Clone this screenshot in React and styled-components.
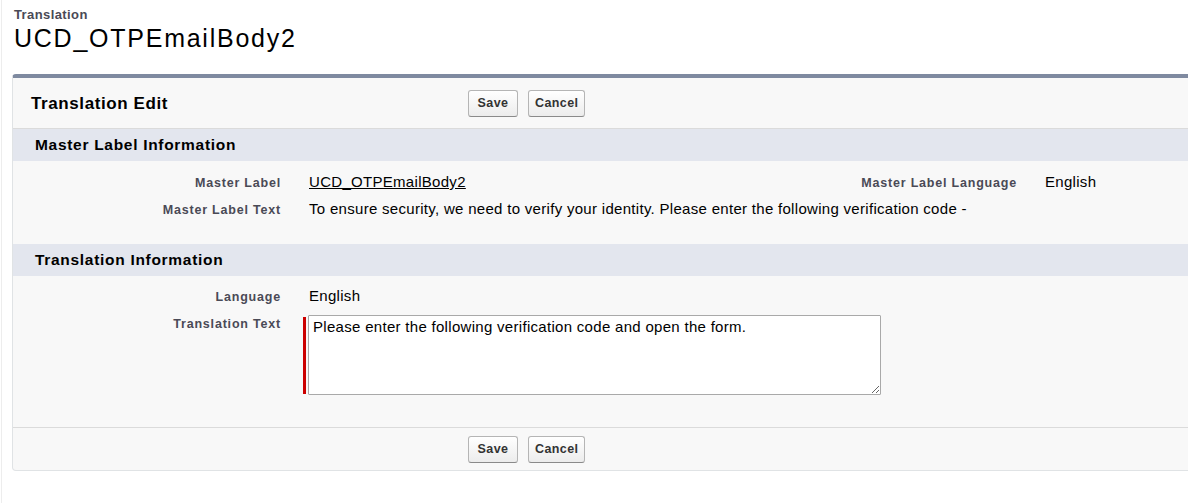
import React from "react";
import styled, { createGlobalStyle } from "styled-components";

const GlobalStyle = createGlobalStyle`
  html, body {
    margin: 0;
    padding: 0;
    background: #fff;
    overflow: hidden;
  }
  body {
    font-family: "Liberation Sans", Arial, sans-serif;
    color: #000;
  }
`;

const App = () => {
  return (
    <>
      <GlobalStyle />
      <Page>
        <PageHeader>
          <PageType>Translation</PageType>
          <PageTitle>UCD_OTPEmailBody2</PageTitle>
        </PageHeader>

        <Panel>
          <PanelHeader>
            <PanelTitle>Translation Edit</PanelTitle>
            <ButtonGroup>
              <Button>Save</Button>
              <Button>Cancel</Button>
            </ButtonGroup>
          </PanelHeader>

          <SectionHeader>Master Label Information</SectionHeader>
          <SectionBody top={9} bottom={20}>
            <FieldGrid>
              <Label>Master Label</Label>
              <Value>
                <LinkText>UCD_OTPEmailBody2</LinkText>
              </Value>
              <Label>Master Label Language</Label>
              <Value>English</Value>

              <Label>Master Label Text</Label>
              <Value span={3}>
                To ensure security, we need to verify your identity. Please enter the following verification code -
              </Value>
            </FieldGrid>
          </SectionBody>

          <SectionHeader>Translation Information</SectionHeader>
          <SectionBody top={8} bottom={29}>
            <FieldGrid>
              <Label>Language</Label>
              <Value span={3}>English</Value>

              <Label>Translation Text</Label>
              <Value span={3}>
                <RequiredField>
                  <RequiredBar />
                  <TextArea defaultValue="Please enter the following verification code and open the form." />
                </RequiredField>
              </Value>
            </FieldGrid>
          </SectionBody>

          <PanelFooter>
            <ButtonGroup>
              <Button>Save</Button>
              <Button>Cancel</Button>
            </ButtonGroup>
          </PanelFooter>
        </Panel>
      </Page>
    </>
  );
};

export default App;

const Page = styled.div`
  margin-left: 1px;
  border-left: 1px solid #ededed;
  padding: 8px 0 0 10px;
  min-height: 503px;
  box-sizing: border-box;
`;

const PageHeader = styled.div`
  padding: 0 0 0 2px;
  margin-bottom: 22px;
`;

const PageType = styled.div`
  font-size: 13px;
  letter-spacing: 0.4px;
  font-weight: bold;
  color: #4a4a56;
  line-height: 14px;
`;

const PageTitle = styled.h1`
  margin: 2px 0 0;
  font-size: 25px;
  letter-spacing: 1.75px;
  font-weight: normal;
  line-height: 28px;
  color: #000;
`;

const Panel = styled.div`
  margin-right: -20px;
  background: #f8f8f8;
  border: 1px solid #e0e3e5;
  border-top: 4px solid #7f8aa0;
  border-radius: 4px;
`;

const PanelHeader = styled.div`
  display: flex;
  align-items: center;
  height: 50px;
  padding: 0 18px;
  border-bottom: 1px solid #dbdbdb;
`;

const PanelTitle = styled.h2`
  margin: 0;
  padding-top: 2px;
  width: 437px;
  font-size: 17px;
  letter-spacing: 0.6px;
  font-weight: bold;
  color: #000;
`;

const ButtonGroup = styled.div`
  display: flex;
  gap: 10px;
`;

const Button = styled.button`
  font-family: "Liberation Sans", Arial, sans-serif;
  font-size: 12.5px;
  letter-spacing: 0.4px;
  font-weight: bold;
  color: #333;
  height: 27px;
  padding: 0 6px;
  min-width: 50px;
  background: linear-gradient(#ffffff, #ececec);
  border: 1px solid #b5b5b5;
  border-bottom-color: #8a8a8a;
  border-radius: 3px;
  cursor: pointer;
`;

const SectionHeader = styled.h3`
  margin: 0;
  height: 32px;
  line-height: 31px;
  padding-left: 22px;
  background: #e3e6ee;
  font-size: 15.5px;
  letter-spacing: 0.7px;
  font-weight: bold;
  color: #000;
`;

const SectionBody = styled.div`
  padding: ${(p) => `${p.top}px 0 ${p.bottom}px`};
`;

const FieldGrid = styled.div`
  display: grid;
  grid-template-columns: 282px 472px 264px 1fr;
`;

const Label = styled.div`
  text-align: right;
  padding: 0 14px 0 0;
  font-size: 12.5px;
  letter-spacing: 0.8px;
  font-weight: bold;
  color: #4a4a56;
  line-height: 27px;
  white-space: nowrap;
`;

const Value = styled.div`
  grid-column: span ${(p) => p.span || 1};
  padding: 0 0 3px 14px;
  font-size: 15px;
  letter-spacing: 0.3px;
  color: #000;
  line-height: 24px;
  white-space: nowrap;
`;

const LinkText = styled.a`
  color: #000;
  text-decoration: underline;
  cursor: pointer;
`;

const RequiredField = styled.div`
  display: flex;
  align-items: stretch;
  margin-top: 4px;
  margin-left: -6px;
`;

const RequiredBar = styled.div`
  width: 3px;
  margin: 2px 2px 1px 0;
  background: #c00;
`;

const TextArea = styled.textarea`
  display: block;
  width: 573px;
  height: 80px;
  box-sizing: border-box;
  padding: 2px 4px;
  font-family: "Liberation Sans", Arial, sans-serif;
  font-size: 15px;
  letter-spacing: 0.3px;
  line-height: 17px;
  color: #000;
  background: #fff;
  border: 1px solid #a9a9a9;
  border-radius: 1px;
`;

const PanelFooter = styled.div`
  display: flex;
  align-items: center;
  height: 42px;
  padding: 0 0 0 455px;
  border-top: 1px solid #dbdbdb;
`;
